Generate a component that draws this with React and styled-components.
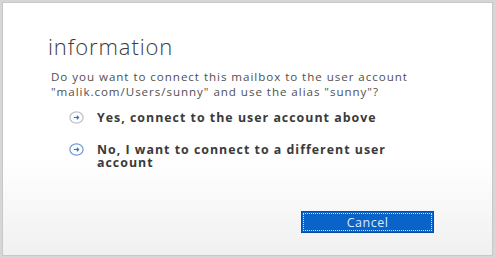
import React from 'react'
import styled, { createGlobalStyle } from 'styled-components'

const Global = createGlobalStyle`
body{
  margin:0;
  background:#dcdcdc;
  font-family:"Open Sans","Liberation Sans",sans-serif;
}
`

const Frame = styled.div`
width:496px;
height:258px;
box-sizing:border-box;
padding:2px 3px 2px 2px;
background:#d6d6d6;
`
const Dialog = styled.div`
height:100%;
box-sizing:border-box;
border:1px solid #c8c8c8;
background:linear-gradient(to bottom,#ffffff 0%,#ffffff 62%,#f0f0f0 100%);
padding:28px 40px 0 45px;
display:flex;
flex-direction:column;
`
const Title = styled.h1`
margin:0;
font-size:22px;
font-weight:300;
color:#3b3b3b;
letter-spacing:0.9px;
`
const Message = styled.p`
margin:8px 0 0 3px;
font-size:11.6px;
line-height:15px;
letter-spacing:0.95px;
color:#505050;
`
const Options = styled.div`
display:flex;
flex-direction:column;
gap:19px;
margin:12px 0 0 21px;
`
const Option = styled.div`
display:flex;
align-items:flex-start;
gap:13px;
font-size:12.4px;
font-weight:700;
line-height:13px;
letter-spacing:1px;
color:#3a3a3a;
max-width:322px;
`
const Icon = styled.svg`
flex:none;
margin-top:0;
`
const Footer = styled.div`
display:flex;
justify-content:flex-end;
margin-top:auto;
padding-bottom:22px;
`
const Button = styled.button`
width:133px;
height:22px;
margin-right:18px;
border:1px solid #0b4d9a;
background:#0a63c9;
outline:1px dotted #cfe0f5;
outline-offset:-3px;
color:#dfeaf7;
font-family:"Open Sans","Liberation Sans",sans-serif;
font-size:12.5px;
letter-spacing:0.5px;
padding:0;
`

function Arrow({ tone }) {
  return (
    <Icon width="15" height="13" viewBox="0 0 15 13">
      <ellipse cx="7.5" cy="6.5" rx="6.6" ry="5.6" fill="#fff" stroke={tone} strokeWidth="1.2" />
      <path d="M4.8 6.5h4.6M7.8 4.8l1.8 1.7-1.8 1.7" fill="none" stroke="#3b78c4" strokeWidth="1.2" />
    </Icon>
  )
}

export default function App() {
  return (
    <>
      <Global />
      <Frame>
        <Dialog>
          <Title>information</Title>
          <Message>
            Do you want to connect this mailbox to the user account<br />
            "malik.com/Users/sunny" and use the alias "sunny"?
          </Message>
          <Options>
            <Option><Arrow tone="#b8bfc8" />Yes, connect to the user account above</Option>
            <Option><Arrow tone="#6d9ad6" />No, I want to connect to a different user account</Option>
          </Options>
          <Footer>
            <Button>Cancel</Button>
          </Footer>
        </Dialog>
      </Frame>
    </>
  )
}
